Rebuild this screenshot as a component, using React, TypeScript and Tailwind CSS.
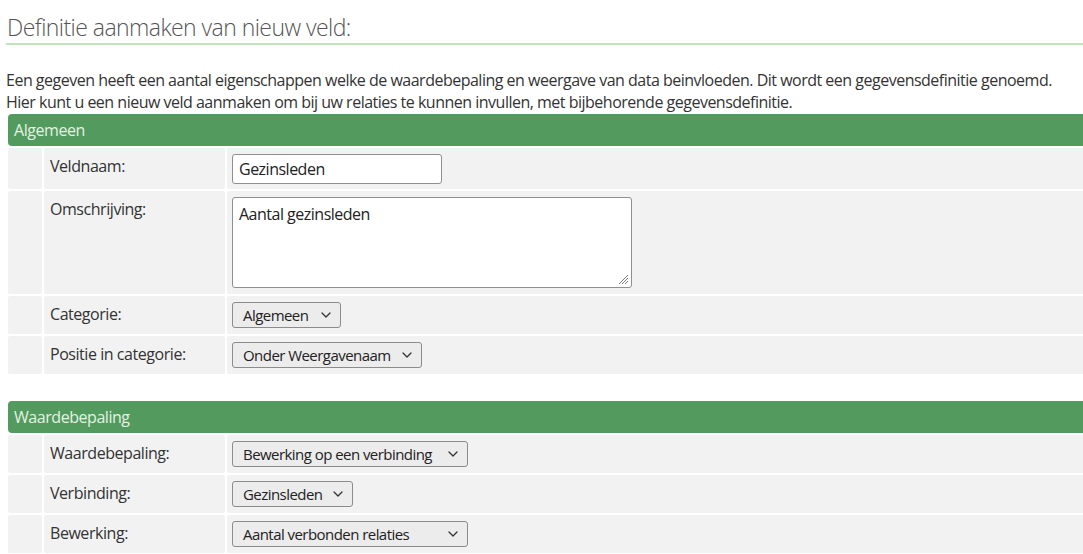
import React from "react";

const Chevron = () => (
  <svg width="10" height="6" viewBox="0 0 10 6" fill="none" className="shrink-0">
    <path d="M1 1l4 4 4-4" stroke="#333" strokeWidth="1.3" strokeLinecap="round" strokeLinejoin="round" />
  </svg>
);

const Select = ({ value, w }: { value: string; w: string }) => (
  <div
    className={`${w} h-[26px] flex items-center justify-between pl-[10px] pr-[9px] bg-[#ececec] border border-[#8c8c8c] rounded-[3px] text-[15px] text-[#222] leading-none tracking-[-0.55px]`}
  >
    <span className="whitespace-nowrap">{value}</span>
    <Chevron />
  </div>
);

const Row = ({ label, children }: { label: string; children: React.ReactNode }) => (
  <div className="flex gap-[2px]">
    <div className="w-[34px] shrink-0 bg-[#f2f2f2] rounded-[2px]" />
    <div className="w-[181px] shrink-0 bg-[#f2f2f2] rounded-[2px] pl-[6px] pt-[6px] text-[16px] leading-[24px] text-[#333] tracking-[-0.45px]">
      {label}
    </div>
    <div className="flex-1 bg-[#f2f2f2] rounded-[2px] pl-[5px] pt-[6px] pb-[6px]">{children}</div>
  </div>
);

const Header = ({ title }: { title: string }) => (
  <div className="h-[32px] bg-[#539a5f] rounded-[4px] pl-[6px] flex items-center text-[16px] text-[#e3f3e1] tracking-[-0.45px]">
    {title}
  </div>
);

export default function App() {
  return (
    <div
      className="bg-white w-[1083px] h-[554px] overflow-hidden"
      style={{ fontFamily: '"Segoe UI", "Open Sans", "Noto Sans", sans-serif' }}
    >
      <h1 className="w-[1100px] ml-[6px] pl-[1px] pt-[11px] text-[23px] leading-[32px] font-light text-[#555] border-b-2 border-[#c2e4bb] tracking-[-0.55px]">
        Definitie aanmaken van nieuw veld:
      </h1>
      <p className="mt-[24px] ml-[6px] text-[16px] leading-[22px] text-[#333] tracking-[-0.5px] whitespace-nowrap">
        Een gegeven heeft een aantal eigenschappen welke de waardebepaling en weergave van data beinvloeden. Dit wordt een gegevensdefinitie genoemd.
        <br />
        Hier kunt u een nieuw veld aanmaken om bij uw relaties te kunnen invullen, met bijbehorende gegevensdefinitie.
      </p>
      <div className="w-[1100px] ml-[8px] mt-[1px] flex flex-col gap-[2px]">
        <Header title="Algemeen" />
        <Row label="Veldnaam:">
          <input
            readOnly
            defaultValue="Gezinsleden"
            className="block w-[210px] h-[30px] mb-[-1px] border border-[#8f8f8f] rounded-[3px] bg-white px-[6px] text-[16px] text-[#222] tracking-[-0.5px] outline-none"
          />
        </Row>
        <Row label="Omschrijving:">
          <div className="relative w-[400px] h-[91px] border border-[#8f8f8f] rounded-[3px] bg-white px-[6px] pt-[5px] text-[16px] leading-[22px] text-[#222] tracking-[-0.5px]">
            Aantal gezinsleden
            <svg className="absolute right-[2px] bottom-[2px]" width="12" height="12" viewBox="0 0 12 12">
              <path d="M11 2L2 11M11 5L5 11M11 8L8 11" stroke="#777" strokeWidth="1" />
            </svg>
          </div>
        </Row>
        <Row label="Categorie:">
          <Select value="Algemeen" w="w-[109px]" />
        </Row>
        <Row label="Positie in categorie:">
          <Select value="Onder Weergavenaam" w="w-[190px]" />
        </Row>
        <div className="h-[23px]" />
        <Header title="Waardebepaling" />
        <Row label="Waardebepaling:">
          <Select value="Bewerking op een verbinding" w="w-[236px]" />
        </Row>
        <Row label="Verbinding:">
          <Select value="Gezinsleden" w="w-[121px]" />
        </Row>
        <Row label="Bewerking:">
          <Select value="Aantal verbonden relaties" w="w-[236px]" />
        </Row>
      </div>
    </div>
  );
}
